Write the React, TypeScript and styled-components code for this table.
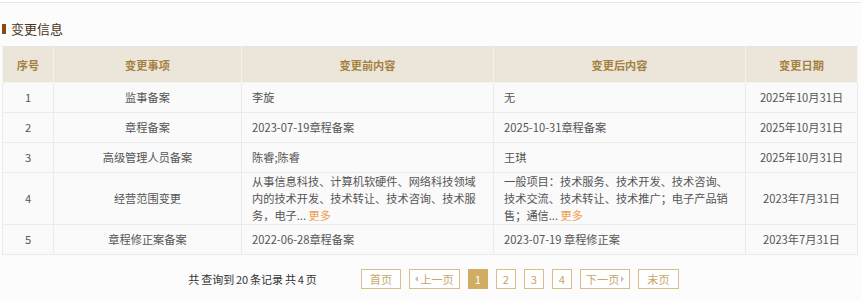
import styled, { createGlobalStyle } from 'styled-components';

const GlobalStyle = createGlobalStyle`
  html, body {
    margin: 0;
    padding: 0;
    background: #ffffff;
    font-family: "Noto Sans CJK SC", "Noto Sans", sans-serif;
  }
`;

const Panel = styled.div`
  margin-top: 2px;
  border-top: 1px solid #e8e8e8;
  border-bottom: 1px solid #e8e8e8;
  background: #fcfcfc;
  padding: 16px 4px 12px 2px;
`;

const Title = styled.h3`
  display: flex;
  align-items: center;
  gap: 5px;
  height: 20px;
  margin: 0 0 7px;
  font-size: 13px;
  font-weight: normal;
  line-height: 20px;
  color: #4a3520;
`;

const TitleMark = styled.span`
  width: 4px;
  height: 10px;
  background: #8b4a12;
`;

const Table = styled.table`
  width: 855px;
  table-layout: fixed;
  border-collapse: collapse;
  border: 1px solid #e6e6e6;
  font-size: 11.2px;
`;

const HeadCell = styled.th`
  height: 35px;
  padding: 0;
  background: #ebe5da;
  border: 1px solid #f6f3ee;
  border-top-color: #e6e6e6;
  color: #a5813f;
  font-weight: bold;
  text-align: center;
`;

const Cell = styled.td<{ $align?: 'left' | 'center'; $multi?: boolean }>`
  padding: ${(p) => (p.$multi ? '0 10px' : '6px 10px')};
  height: ${(p) => (p.$multi ? 'auto' : '17px')};
  background: #fafafa;
  border: 1px solid #ebebeb;
  color: #555555;
  line-height: 17px;
  text-align: ${(p) => p.$align || 'left'};
  vertical-align: middle;
  word-break: break-all;
`;

const Tail = styled.span``;

const More = styled.span`
  color: #f0a050;
`;

const Pager = styled.div`
  display: flex;
  justify-content: center;
  align-items: center;
  gap: 8px;
  margin-top: 14px;
  padding-left: 8px;
  font-size: 11.2px;
`;

const Summary = styled.span`
  color: #333333;
  margin-right: 36px;
  font-size: 11px;
  word-spacing: -0.6px;
`;

const PageButton = styled.span<{ $active?: boolean; $num?: boolean; $arrow?: boolean }>`
  display: inline-flex;
  align-items: center;
  justify-content: center;
  gap: 2px;
  box-sizing: border-box;
  height: 20px;
  min-width: ${(p) => (p.$num ? '20px' : 'auto')};
  padding: ${(p) => (p.$num ? '0' : p.$arrow ? '0 5px' : '0 8px')};
  border: 1px solid ${(p) => (p.$active ? '#d1ad63' : '#d8be8a')};
  background: ${(p) => (p.$active ? '#d1ad63' : '#ffffff')};
  color: ${(p) => (p.$active ? '#ffffff' : '#c5a66b')};
`;

const Arrow = styled.i<{ $dir: 'left' | 'right' }>`
  width: 0;
  height: 0;
  border-top: 3px solid transparent;
  border-bottom: 3px solid transparent;
  ${(p) =>
    p.$dir === 'left'
      ? 'border-right: 3px solid #c0c0c0;'
      : 'border-left: 3px solid #c0c0c0;'}
`;

type Row = {
  no: number;
  item: string;
  before: string;
  after: string;
  date: string;
  // truncated remainder shown before the "更多" link
  beforeTail?: string;
  afterTail?: string;
};

const rows: Row[] = [
  { no: 1, item: '监事备案', before: '李旋', after: '无', date: '2025年10月31日' },
  { no: 2, item: '章程备案', before: '2023-07-19章程备案', after: '2025-10-31章程备案', date: '2025年10月31日' },
  { no: 3, item: '高级管理人员备案', before: '陈睿;陈睿', after: '王琪', date: '2025年10月31日' },
  {
    no: 4,
    item: '经营范围变更',
    before: '从事信息科技、计算机软硬件、网络科技领域内的技术开发、技术转让、技术咨询、技术服',
    beforeTail: '务，电子... ',
    after: '一般项目：技术服务、技术开发、技术咨询、技术交流、技术转让、技术推广；电子产品销',
    afterTail: '售；通信... ',
    date: '2023年7月31日',
  },
  { no: 5, item: '章程修正案备案', before: '2022-06-28章程备案', after: '2023-07-19 章程修正案', date: '2023年7月31日' },
];

export default function App() {
  return (
    <>
      <GlobalStyle />
      <Panel>
        <Title>
          <TitleMark />
          变更信息
        </Title>

        <Table>
          <colgroup>
            <col style={{ width: 51 }} />
            <col style={{ width: 188 }} />
            <col style={{ width: 252 }} />
            <col style={{ width: 252 }} />
            <col style={{ width: 112 }} />
          </colgroup>
          <thead>
            <tr>
              <HeadCell>序号</HeadCell>
              <HeadCell>变更事项</HeadCell>
              <HeadCell>变更前内容</HeadCell>
              <HeadCell>变更后内容</HeadCell>
              <HeadCell>变更日期</HeadCell>
            </tr>
          </thead>
          <tbody>
            {rows.map((r) => {
              const multi = !!(r.beforeTail || r.afterTail);
              return (
                <tr key={r.no}>
                  <Cell $align="center" $multi={multi}>{r.no}</Cell>
                  <Cell $align="center" $multi={multi}>{r.item}</Cell>
                  <Cell $multi={multi}>
                    {r.before}
                    {r.beforeTail && (
                      <>
                        <Tail>{r.beforeTail}</Tail>
                        <More>更多</More>
                      </>
                    )}
                  </Cell>
                  <Cell $multi={multi}>
                    {r.after}
                    {r.afterTail && (
                      <>
                        <Tail>{r.afterTail}</Tail>
                        <More>更多</More>
                      </>
                    )}
                  </Cell>
                  <Cell $align="center" $multi={multi}>{r.date}</Cell>
                </tr>
              );
            })}
          </tbody>
        </Table>

        <Pager>
          <Summary>共 查询到 20 条记录 共 4 页</Summary>
          <PageButton>首页</PageButton>
          <PageButton $arrow>
            <Arrow $dir="left" />
            上一页
          </PageButton>
          <PageButton $num $active>1</PageButton>
          <PageButton $num>2</PageButton>
          <PageButton $num>3</PageButton>
          <PageButton $num>4</PageButton>
          <PageButton $arrow>
            下一页
            <Arrow $dir="right" />
          </PageButton>
          <PageButton>末页</PageButton>
        </Pager>
      </Panel>
    </>
  );
}
